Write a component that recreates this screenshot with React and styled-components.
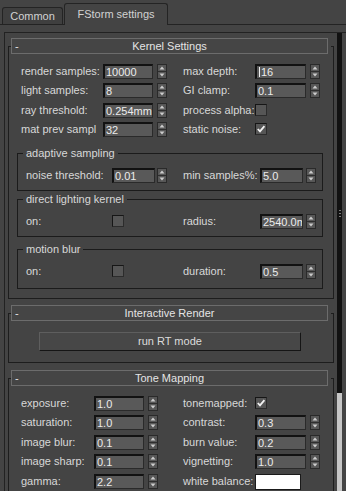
import React from 'react';
import styled, { createGlobalStyle } from 'styled-components';

const GlobalStyle = createGlobalStyle`
  html, body { margin: 0; padding: 0; background: #444444; }
  * { box-sizing: border-box; }
`;

const Root = styled.div`
  width: 346px;
  height: 491px;
  overflow: hidden;
  display: flex;
  flex-direction: column;
  background: #444444;
  color: #d8d8d8;
  font-family: "Liberation Sans", Arial, sans-serif;
  font-size: 11px;
`;

const TabBar = styled.div`
  display: flex;
  align-items: flex-end;
  gap: 1px;
  height: 25px;
  padding-left: 2px;
  border-bottom: 1px solid #232323;
`;

const Tab = styled.div`
  width: ${p => p.$w}px;
  height: ${p => (p.$active ? 22 : 17)}px;
  margin-bottom: ${p => (p.$active ? -1 : 0)}px;
  padding-bottom: ${p => (p.$active ? 2 : 0)}px;
  display: flex;
  align-items: center;
  justify-content: center;
  border: 1px solid #242424;
  border-bottom: none;
  border-radius: 3px 3px 0 0;
  background: ${p => (p.$active ? '#444444' : '#3f3f3f')};
  color: #d2d2d2;
`;

const Body = styled.div`
  flex: 1;
  min-height: 0;
  display: flex;
  margin: 7px 0 0 4px;
  border-top: 1px solid #222222;
  border-left: 1px solid #222222;
`;

const Panel = styled.div`
  width: 332px;
  display: flex;
  flex-direction: column;
`;

const Scrollbar = styled.div`
  width: 5px;
  background: #c6c6c6;
  display: flex;
  flex-direction: column;
`;

const Thumb = styled.div`
  height: 360px;
  background: #111111;
  display: flex;
  align-items: center;
  justify-content: center;
`;

const Grip = styled.div`
  width: 2px;
  height: 7px;
  background: repeating-linear-gradient(#7a7a7a 0 1px, transparent 1px 3px);
`;

const Rollout = styled.section`
  position: relative;
  width: 326px;
  margin: ${p => p.$mt}px 0 0 3px;
  padding-bottom: ${p => p.$pb}px;
  border: 1px solid #1d1d1d;
  border-top: none;

  &::before,
  &::after {
    content: '';
    position: absolute;
    top: 0;
    width: 2px;
    height: 1px;
    background: #1d1d1d;
  }
  &::before { left: 0; }
  &::after { right: 0; }
`;

const RolloutHeader = styled.div`
  display: grid;
  grid-template-columns: 1fr auto 1fr;
  align-items: center;
  height: 16px;
  margin: -8px 5px 0 2px;
  padding: 0 3px;
  border: 1px solid #6c6c6c;
  background: #454545;
  color: #e4e4e4;
  line-height: 14px;

  span:first-child { justify-self: start; }
`;

const FieldGrid = styled.div`
  display: grid;
  grid-template-columns: ${p => p.$cols};
  grid-auto-rows: 15px;
  row-gap: ${p => p.$gap}px;
  margin-top: 10px;
  padding-left: 12px;
  align-items: center;
`;

const Label = styled.span`
  white-space: nowrap;
  line-height: 15px;
`;

const Control = styled.div`
  display: flex;
  align-items: center;
  gap: ${p => p.$gap ?? 4}px;
  height: 15px;
`;

const ValueBox = styled.div`
  width: ${p => p.$w}px;
  height: 15px;
  padding-left: 1px;
  overflow: hidden;
  white-space: nowrap;
  line-height: 12px;
  background: #595959;
  color: #ececec;
  border-top: 2px solid #121212;
  border-left: 2px solid #121212;
  border-right: 1px solid #2a2a2a;
  border-bottom: 1px solid #2a2a2a;
  display: flex;
  align-items: center;
`;

const Caret = styled.span`
  display: inline-block;
  width: 1px;
  height: 10px;
  margin: 0 1px 0 1px;
  background: #f0f0f0;
`;

const CheckBox = styled.div`
  width: 12px;
  height: 12px;
  background: #565656;
  border-top: 1px solid #161616;
  border-left: 1px solid #161616;
  border-right: 1px solid #2c2c2c;
  border-bottom: 1px solid #2c2c2c;
  display: flex;
  align-items: center;
  justify-content: center;
`;

const Swatch = styled.div`
  width: 46px;
  height: 16px;
  align-self: start;
  background: #ffffff;
  border: 1px solid #1a1a1a;
`;

const Group = styled.fieldset`
  margin: ${p => p.$mt}px 10px 0 8px;
  padding: 8px 0 ${p => p.$pb}px 8px;
  border: 1px solid #1b1b1b;
  min-inline-size: 0;
`;

const Legend = styled.legend`
  margin-left: -3px;
  padding: 0 3px;
  line-height: 13px;
  color: #d8d8d8;
`;

const GroupRow = styled.div`
  display: grid;
  grid-template-columns: 86px 71px 77px 1fr;
  height: 15px;
  align-items: center;
`;

const WideButton = styled.div`
  width: 262px;
  height: 19px;
  margin: 11px 0 0 30px;
  display: flex;
  align-items: center;
  justify-content: center;
  background: #474747;
  color: #dcdcdc;
  border-top: 1px solid #5e5e5e;
  border-left: 1px solid #5e5e5e;
  border-right: 1px solid #151515;
  border-bottom: 1px solid #151515;
`;

function SpinArrows() {
  return (
    <svg width="10" height="15" viewBox="0 0 10 15">
      <rect x="0.5" y="0.5" width="9" height="14" fill="#575757" stroke="#2a2a2a" />
      <line x1="1" y1="7.5" x2="9" y2="7.5" stroke="#2e2e2e" />
      <path d="M2.5 5.5 L5 2.5 L7.5 5.5 Z" fill="#cdcdcd" />
      <path d="M2.5 9.5 L5 12.5 L7.5 9.5 Z" fill="#cdcdcd" />
    </svg>
  );
}

function Spinner({ value, w, gap, caret }) {
  return (
    <Control $gap={gap}>
      <ValueBox $w={w}>
        {caret && <Caret />}
        {value}
      </ValueBox>
      <SpinArrows />
    </Control>
  );
}

function Check({ on }) {
  return (
    <CheckBox>
      {on && (
        <svg width="10" height="10" viewBox="0 0 10 10">
          <path d="M1.8 5 L4 7.4 L8.4 2.2" fill="none" stroke="#f2f2f2" strokeWidth="1.8" />
        </svg>
      )}
    </CheckBox>
  );
}

function Header({ title }) {
  return (
    <RolloutHeader>
      <span>-</span>
      <span>{title}</span>
      <span />
    </RolloutHeader>
  );
}

const kernelRows = [
  ['render samples:', '10000', 'max depth:', { value: '16', caret: true }],
  ['light samples:', '8', 'GI clamp:', { value: '0.1' }],
  ['ray threshold:', '0.254mm', 'process alpha:', { check: false }],
  ['mat prev sampl', '32', 'static noise:', { check: true }],
];

const toneRows = [
  ['exposure:', '1.0', 'tonemapped:', { check: true }],
  ['saturation:', '1.0', 'contrast:', { value: '0.3' }],
  ['image blur:', '0.1', 'burn value:', { value: '0.2' }],
  ['image sharp:', '0.1', 'vignetting:', { value: '1.0' }],
  ['gamma:', '2.2', 'white balance:', { swatch: true }],
];

function RightCell({ cell }) {
  if (cell.swatch) return <Swatch />;
  if ('check' in cell) return <Control><Check on={cell.check} /></Control>;
  return <Spinner value={cell.value} w={51} caret={cell.caret} />;
}

export default function App() {
  return (
    <Root>
      <GlobalStyle />
      <TabBar>
        <Tab $w={61}>Common</Tab>
        <Tab $w={104} $active>FStorm settings</Tab>
      </TabBar>
      <Body>
        <Panel>
          <Rollout $mt={13} $pb={9}>
            <Header title="Kernel Settings" />
            <FieldGrid $cols="82px 80px 72px 1fr" $gap={4.33}>
              {kernelRows.map(([l, v, r, cell]) => (
                <React.Fragment key={l}>
                  <Label>{l}</Label>
                  <Spinner value={v} w={50} />
                  <Label>{r}</Label>
                  <RightCell cell={cell} />
                </React.Fragment>
              ))}
            </FieldGrid>
            <Group $mt={10} $pb={7}>
              <Legend>adaptive sampling</Legend>
              <GroupRow>
                <Label>noise threshold:</Label>
                <Spinner value="0.01" w={43} gap={2} />
                <Label>min samples%:</Label>
                <Spinner value="5.0" w={43} gap={3} />
              </GroupRow>
            </Group>
            <Group $mt={2} $pb={7}>
              <Legend>direct lighting kernel</Legend>
              <GroupRow>
                <Label>on:</Label>
                <Control><Check /></Control>
                <Label>radius:</Label>
                <Spinner value="2540.0mm" w={43} gap={3} />
              </GroupRow>
            </Group>
            <Group $mt={6} $pb={9}>
              <Legend>motion blur</Legend>
              <GroupRow>
                <Label>on:</Label>
                <Control><Check /></Control>
                <Label>duration:</Label>
                <Spinner value="0.5" w={43} gap={3} />
              </GroupRow>
            </Group>
          </Rollout>

          <Rollout $mt={14} $pb={11}>
            <Header title="Interactive Render" />
            <WideButton>run RT mode</WideButton>
          </Rollout>

          <Rollout $mt={15} $pb={12}>
            <Header title="Tone Mapping" />
            <FieldGrid $cols="73px 89px 72px 1fr" $gap={4.5}>
              {toneRows.map(([l, v, r, cell]) => (
                <React.Fragment key={l}>
                  <Label>{l}</Label>
                  <Spinner value={v} w={50} />
                  <Label>{r}</Label>
                  <RightCell cell={cell} />
                </React.Fragment>
              ))}
            </FieldGrid>
          </Rollout>
        </Panel>
        <Scrollbar>
          <Thumb>
            <Grip />
          </Thumb>
        </Scrollbar>
      </Body>
    </Root>
  );
}
